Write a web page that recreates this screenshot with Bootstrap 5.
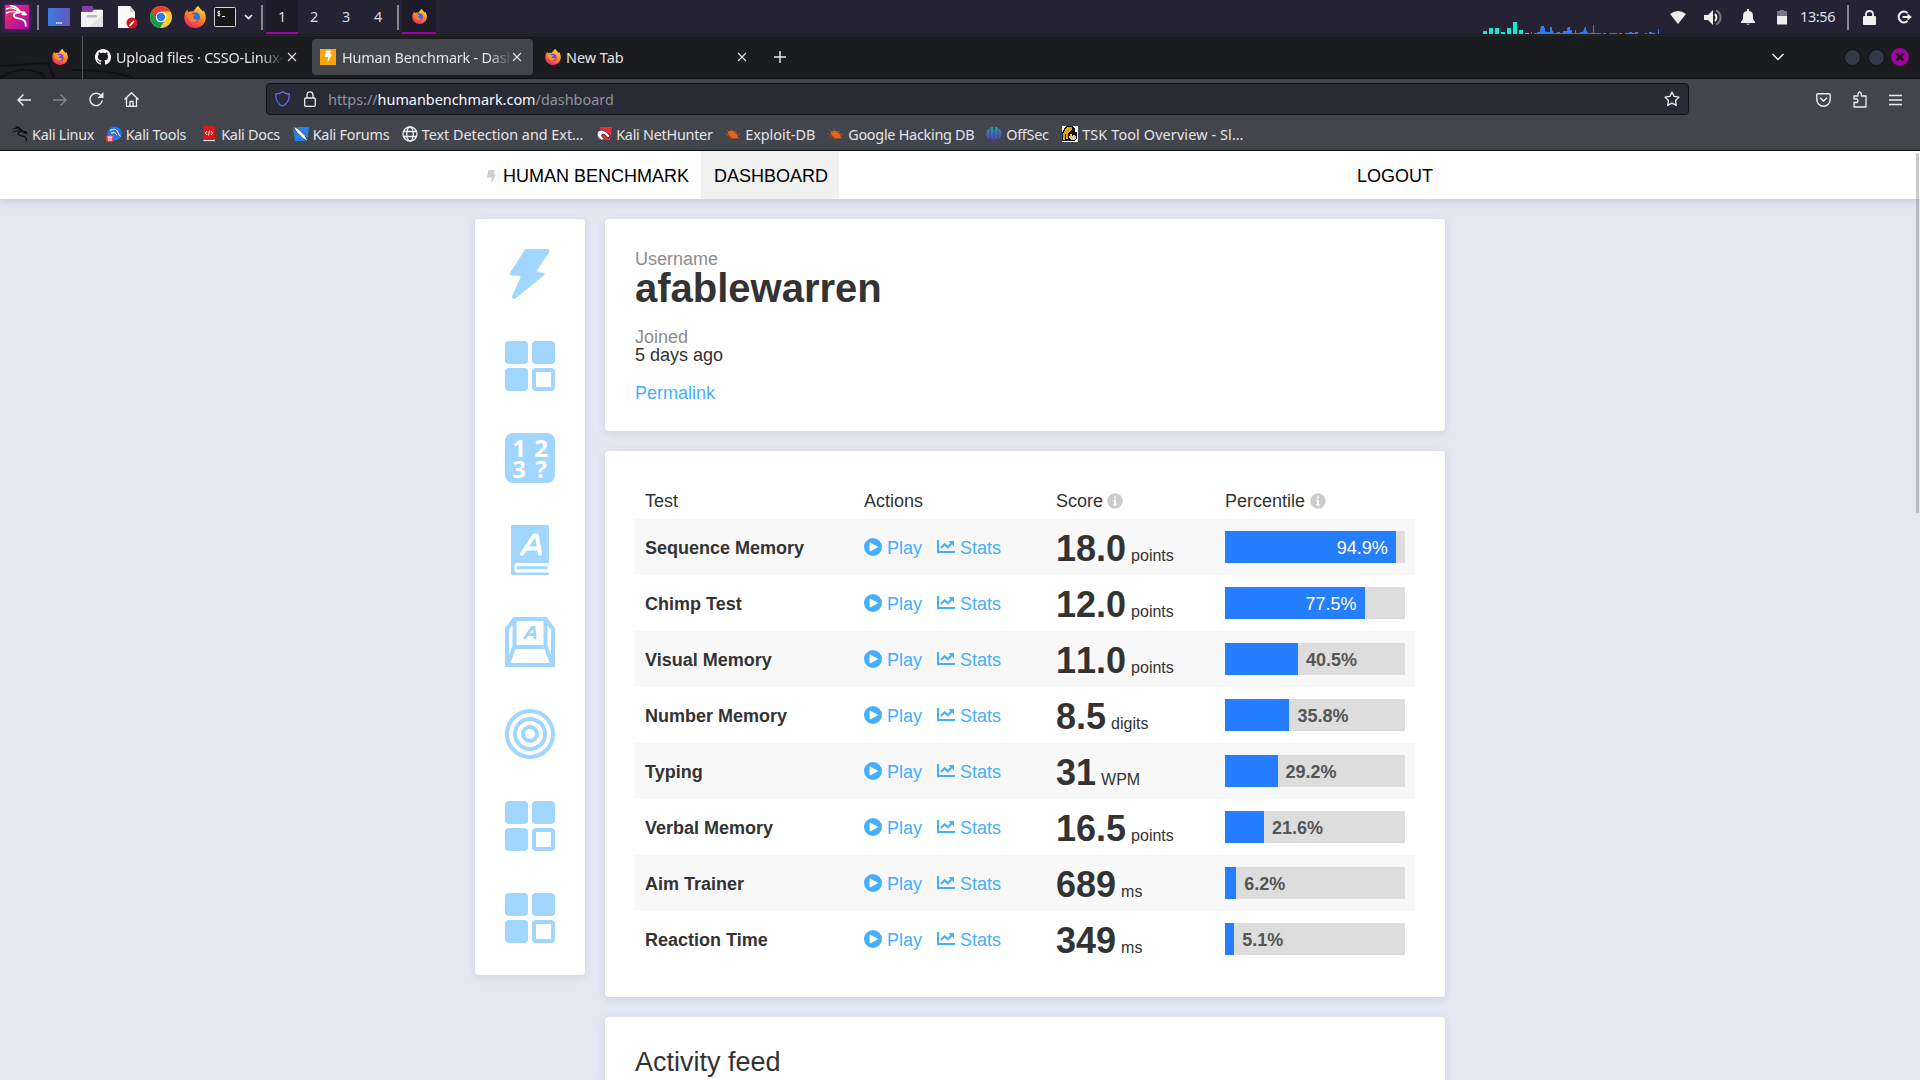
<!DOCTYPE html>
<html lang="en">
<head>
<meta charset="utf-8">
<title>Human Benchmark - Dashboard</title>
<link href="https://cdn.jsdelivr.net/npm/bootstrap@5.3.0/dist/css/bootstrap.min.css" rel="stylesheet">
<style>
body{width:1920px;height:1080px;overflow:hidden;background:#e5e8f3;color:#333;font-family:"Liberation Sans",Arial,sans-serif;font-size:18px;line-height:18px}
svg{display:block;flex:none}
.ui-font{font-family:"Noto Sans",sans-serif;font-size:14.4px;line-height:20px;color:#e4e4e6;white-space:nowrap}
.desk-panel{height:35px;background:#252333;border-bottom:1px solid #1b1b20;padding-left:5px}
.sep-bar{width:2px;height:25px;background:#88878d}
.ws{width:32px;height:34px;line-height:33px;text-align:center;color:#d6dde8}
.ws-on{background:#1e1b29;border-bottom:2px solid #a000a4}
.clock{width:36px;margin-left:13px;margin-right:-1px;margin-top:-1px;color:#dbe2ea;letter-spacing:-.35px}
.tabstrip{height:44px;background:#1b1c20;border-top:1px solid #26272b;border-bottom:1px solid #101114;position:relative}
.pinned{width:83px;height:43px;border-right:1px solid #56575b;padding-left:52px;position:relative}
.tab-item{height:36px;border-radius:4px;padding:0 8px}
.tab-item span{padding-top:1px}
.tab-on{background:#43454d}
.fade-text{overflow:hidden;-webkit-mask-image:linear-gradient(90deg,#000 calc(100% - 24px),transparent)}
.toolbar{height:41px;background:#43454d;position:relative}
.urlbar{width:1423px;height:32px;background:#282a36;border:1px solid #101116;border-radius:4px;padding:0 8px;color:#91929a}
.bookmarks{height:31px;background:#43454d;border-bottom:1px solid #0c0c0e;padding:0 0 2px 12px}
.bm{display:flex;align-items:center;gap:4px;margin-right:12px;letter-spacing:-.26px}
.bm span{padding-top:2px}
.bm-even{letter-spacing:-.02px}
.bm-tight{letter-spacing:-.26px}
.bm-wide{letter-spacing:.13px}
.winbtn{width:17px;height:17px;border-radius:50%;background:#353a48;border:1px solid #0d0e11}
.site-nav{height:48px;background:#fff;box-shadow:0 2px 8px rgba(40,40,90,.17);position:relative;color:#000}
.nav-in{width:970px;padding-left:1px}
.nav-cell{height:48px;display:flex;align-items:center;padding:2px 12px 0 13px}
.panel-box{background:#fff;border-radius:4px;box-shadow:0 2px 8px rgba(40,40,90,.12)}
.side-box{width:110px;height:756px;padding-top:30px;gap:42px;color:#a1d6ff}
.main-col{width:840px;gap:20px}
.user-box{height:212px;padding:31px 30px 0}
.score-box{height:546px;padding:30px}
.feed-box{height:63px;padding:30px 30px 0;font-size:27px;line-height:31px;border-bottom-left-radius:0;border-bottom-right-radius:0}
.soft{color:#8c8c8c}
.user-name{font-size:40px;line-height:40px;font-weight:700}
.hb-link{color:#45afff;text-decoration:none}
.score-tab{width:780px;table-layout:fixed;border-collapse:collapse}
.score-tab th{font-weight:400;height:38px;padding:2px 10px 0}
.score-tab td{height:56px;padding:0 10px;vertical-align:middle}
.score-tab td.text-cell{padding-top:2px}
.score-tab td.num-cell{padding-top:4px}
.score-tab tbody tr:nth-child(odd){background:#f8f8f8}
.big-num{font-size:36px;line-height:36px;font-weight:700;font-kerning:none}
.unit{font-size:16px}
.track{height:32px;background:#ddd}
.fill{height:32px;background:#257dff;color:#fff;text-align:right;padding-right:8px;line-height:34px}
.pct{color:#555;font-weight:700;padding-left:8px;line-height:34px}
.key-digit{font:700 24px/21px "Noto Sans",sans-serif;color:#fff;text-align:center}
.digits-tile{width:50px;height:50px;border-radius:8px;background:#a1d6ff;display:grid;grid-template:21px 21px/22px 22px;padding:4px 3px}
.scroll-thumb{position:absolute;right:1px;top:153px;width:3px;height:360px;background:rgba(100,100,105,.34);border-radius:2px}
</style>
<script src="https://cdn.jsdelivr.net/npm/bootstrap@5.3.0/dist/js/bootstrap.bundle.min.js"></script>
</head>
<body class="position-relative">
<svg width="0" height="0" class="position-absolute">
<defs>
<linearGradient id="gk" x1="0" y1="0" x2="1" y2="1"><stop offset="0" stop-color="#f03a5c"/><stop offset="1" stop-color="#a304ae"/></linearGradient>
<linearGradient id="gd" x1="0" y1="0" x2="1" y2="0"><stop offset="0" stop-color="#3a7be6"/><stop offset="1" stop-color="#6a56bb"/></linearGradient>
<linearGradient id="gf" x1=".8" y1="0" x2=".3" y2="1"><stop offset="0" stop-color="#ffe94a"/><stop offset=".45" stop-color="#ff8a20"/><stop offset="1" stop-color="#f6205f"/></linearGradient>
<linearGradient id="go" x1="0" y1="0" x2="0" y2="1"><stop offset="0" stop-color="#15a5b4"/><stop offset="1" stop-color="#6330c0"/></linearGradient>
<linearGradient id="gs" x1="0" y1="1" x2="1" y2="0"><stop offset="0" stop-color="#2a6cf0"/><stop offset="1" stop-color="#8f66e0"/></linearGradient>
<symbol id="fox" viewBox="0 0 20 20"><path fill="url(#gf)" d="M10 20C4.500 20 .3 15.800.3 10.400.3 7 1.500 5 3 3.200c.1 1 .4 1.600.9 2.200C5.400 4.700 7 4.600 8.600 5c.7-1.500 1.300-2.200 2.200-3C11.300.8 12.500.2 13.300 0c.4 2.100 2.600 3.200 3.800 5 .4-.2.5-.7.5-1.200 1.400 1.800 2.200 4 2.200 6.600C19.800 15.800 15.500 20 10 20z"/><circle cx="9.800" cy="10.500" r="4.500" fill="#7542e5"/><path fill="#ff9a25" d="M2.600 7.200c2-1 4.200-.8 6 .5l2.500.1c0 1.400-2.600 1.400-2.800 2.200 1 1.800 3.300 2.200 4.600.9-.5 2.900-3.500 4.500-6 3.300C4.300 13 2.700 10.500 2.600 7.200z"/></symbol>
<symbol id="foxblue" viewBox="0 0 20 20"><use href="#fox"/><circle cx="10.500" cy="9.800" r="3.800" fill="#2d6ee0"/><path fill="#ff7b35" d="M2.600 7.200c2-1 4.200-.8 6 .5l1.500.1c0 1.400-1.600 1.400-1.800 2.200 1 2.800 3.300 3.200 4.600 1.900-.5 1.900-3.500 3.500-6 2.300C4.300 13 2.700 10.500 2.600 7.200z"/></symbol>
<symbol id="dragon" viewBox="0 0 24 24"><g fill="none" stroke="currentColor" stroke-linecap="round" stroke-linejoin="round"><path stroke-width="1.300" d="M1.500 4.500c4-1.800 8-1.300 11.500 1.800M1.500 9c4-2.300 8-2.300 12.500-.8"/><path stroke-width="2" d="M6 1.200c4 .6 7.500 2.800 9.500 6.200l4.500.9 2 2.200-4-.4M15 8.500c-5-.4-7 2-5 4.400 2.200 2.400 8.500 1.300 10.500 4.400 1 1.600 1.200 3 1.200 4.900"/></g></symbol>
<symbol id="close" viewBox="0 0 10 10"><path d="M1 1l8 8M9 1L1 9" fill="none" stroke="currentColor" stroke-width="1.100"/></symbol>
<symbol id="bug" viewBox="0 0 16 16"><path fill="#ee6411" d="M3 5.500c2.500-2 7 0 9 3.500l1.500 3-3 .5C6.500 12.500 2.500 9 3 5.500z"/><path d="M0 8h4l-2 2h4l-1 2 4 1M6 3l3 3 2-1 0 3 4 0-3 2 2 3M1 4l5 3" stroke="#b5521f" stroke-width=".8" fill="none"/></symbol>
<symbol id="grid4" viewBox="0 0 50 50"><g fill="currentColor"><rect width="23" height="23" rx="4"/><rect x="27" width="23" height="23" rx="4"/><rect y="27" width="23" height="23" rx="4"/><path fill-rule="evenodd" d="M31 27h15a4 4 0 0 1 4 4v15a4 4 0 0 1-4 4H31a4 4 0 0 1-4-4V31a4 4 0 0 1 4-4zM31 31v15h15V31z"/></g></symbol>
<symbol id="bolt" viewBox="0 0 40 50"><path fill="currentColor" d="M14.500 1.300Q15.300 0 17 0h20q4 0 2 3.500L27.500 20.500q-1 2.500 2 3h3.200q3.500.5 1 3L5.800 49.200Q4 50.600 2.500 49.200q-1-1.200-.3-2.500L10.300 29q.8-2.300-1.500-2.600H2q-3-.2-1.700-3z"/></symbol>
<symbol id="play" viewBox="0 0 18 18"><circle cx="9" cy="9" r="9" fill="currentColor"/><path d="M6 5v8l7.500-4z" fill="#fff" stroke="#fff" stroke-linejoin="round"/></symbol>
<symbol id="stats" viewBox="0 0 18 14"><path d="M1 0v12h17" fill="none" stroke="currentColor" stroke-width="2"/><path d="M4 8l3.700-3.700 3 3L15.500 2.500" fill="none" stroke="currentColor" stroke-width="2.100"/><path d="M11.500 1H17v5.500z" fill="currentColor"/></symbol>
<symbol id="info" viewBox="0 0 16 16"><circle cx="8" cy="8" r="7.700" fill="#ccc"/><path d="M7 3.500h2v2H7zM6.200 6.700H9V11h1v1.400H6.200V11H7V8h-.8z" fill="#fff"/></symbol>
</defs></svg>

<div class="desk-panel ui-font d-flex align-items-center">
  <svg width="24" height="24" viewBox="0 0 24 24" style="overflow:visible;filter:drop-shadow(0 0 2px #a405b5)"><rect width="24" height="24" rx="1" fill="url(#gk)"/><use href="#dragon" width="23" height="23" y="-.5" color="#fff"/></svg>
  <div class="sep-bar ms-2"></div>
  <svg class="ms-2" width="24" height="18" viewBox="0 0 24 18"><rect x="1" width="22" height="18" rx="1" fill="url(#gd)"/><path d="M9 15h6" stroke="#fff" stroke-width="1.500" stroke-dasharray="1.500 .7"/></svg>
  <svg style="margin-left:9px" width="24" height="22" viewBox="0 0 24 22"><path d="M2 1q0-1 1-1h9l2 3h8v4H2z" fill="#8340a8"/><path d="M1 6h11l2-2h9v17H1z" fill="#f2f2f4"/><path d="M23 8v13H9z" fill="#e2e2e4"/><rect x="7" y="9" width="10" height="2.500" rx="1" fill="#b8b8bb"/></svg>
  <svg style="margin-left:12px" width="24" height="24" viewBox="0 0 24 24"><path d="M2 1h12l5 6v16H2z" fill="#fafafa"/><path d="M14 1v6h5z" fill="#d0d0d0"/><circle cx="16" cy="18" r="5.500" fill="#d4161c"/><path d="M13.500 21l4.500-5" stroke="#fff" stroke-width="1.700"/></svg>
  <svg style="margin-left:10px" width="22" height="22" viewBox="0 0 22 22"><circle cx="11" cy="11" r="11" fill="#fccb2c"/><path d="M11 11L1.500 5.500A11 11 0 0 0 10 22l5.500-9z" fill="#189a4c"/><path d="M11 11V5.500h9.500A11 11 0 0 0 1.500 5.500l5 8.500z" fill="#e34133"/><circle cx="11" cy="11" r="5.300" fill="#fff"/><circle cx="11" cy="11" r="4.200" fill="#367ce8"/></svg>
  <svg style="margin-left:12px" width="22" height="22"><use href="#foxblue"/></svg>
  <svg style="margin-left:8px" width="22" height="20" viewBox="0 0 22 20"><rect x=".5" y=".5" width="21" height="19" rx="1" fill="#151619" stroke="#d4d4d6"/><path d="M6 4.500H4.300q-1.300 1.200 0 2h1q1.200 1 0 2H3.500M5 3.500v6M8 9.500h3" stroke="#fff" fill="none"/></svg>
  <svg style="margin-left:8px" width="9" height="6" viewBox="0 0 9 6"><path d="M1 1l3.500 3.500L8 1" fill="none" stroke="#eee" stroke-width="1.700"/></svg>
  <div class="sep-bar" style="margin-left:8px"></div>
  <div class="d-flex" style="margin-left:3px"><div class="ws ws-on">1</div><div class="ws">2</div><div class="ws">3</div><div class="ws">4</div></div>
  <div class="sep-bar" style="margin-left:3px"></div>
  <div class="ws ws-on d-flex align-items-center justify-content-center" style="margin-left:3px;width:34px"><svg width="15" height="15"><use href="#foxblue"/></svg></div>
  <svg class="align-self-end" style="margin-left:1047px" width="178" height="13" viewBox="0 0 178 13"><path fill="#10ecd2" d="M0 10h4v3H0zM6 7h4v6H6zM12 7h4v6h-4zM18 11h4v2h-4zM24 7h4v6h-4zM30 1h4v12h-4zM36 9h4v4h-4zM42 12h4v1h-4z"/><path fill="#2d7cf0" d="M48 11h1v2h-1zM51 13v-1h3v-1h3V9l1-4h3v2h1v3l2 1h3V6h2v3l2 3h3v-1h3v1h3v-2h4V7l1-1h2v3h2v3h3v-3h1v3h4v-1h3l2-5h1v3l2 3h5V4h1v8h4v1zM114 12h4v1h-4zM120 12h3v1h-3zM126 12h8v1h-8zM136 12h3v1h-3zM142 12h4v-1h3v1h3v-1h3v2h-13zM162 12h2v1h-2zM166 11h3v1h3v1h-6zM175 8h1v5h-1z"/></svg>
  <svg style="margin-left:9px" width="16" height="13" viewBox="0 0 16 13"><path fill="#eee" d="M0 3Q8-3 16 3L8 13z"/></svg>
  <svg style="margin-left:18px" width="18" height="17" viewBox="0 0 18 17"><path fill="#eee" d="M0 6h4l5-5v15l-5-5H0z"/><path d="M11 5q3 3.500 0 7" stroke="#eee" stroke-width="2" fill="none"/><path d="M12 1.500c6 3 6 11 0 14" stroke="#77757f" stroke-width="2" fill="none"/></svg>
  <svg style="margin-left:19px" width="14" height="16" viewBox="0 0 14 16"><path fill="#eee" d="M6 0h2v2q4 .7 4 5v3l2 3v1H0v-1l2-3V7q0-4.300 4-5zM5 14.800h4q-2 1.700-4 0z"/></svg>
  <svg style="margin-left:22px" width="10" height="15" viewBox="0 0 10 15"><path fill="#77757f" d="M0 1h3V0h4v1h3v6H0z"/><path fill="#eee" d="M0 6h10v8.500H0z"/></svg>
  <span class="clock">13:56</span>
  <div class="sep-bar" style="margin-left:12px"></div>
  <svg style="margin-left:14px" width="13" height="15" viewBox="0 0 13 15"><path d="M3 7V4q0-3 3.500-3T10 4v3" stroke="#eee" stroke-width="1.800" fill="none"/><rect y="6" width="13" height="9" rx="1" fill="#eee"/></svg>
  <svg style="margin-left:21px" width="16" height="14" viewBox="0 0 16 14"><path d="M10.500 3A5.300 5.300 0 1 0 10.500 11M5.500 7H12" stroke="#eee" stroke-width="2.200" fill="none"/><path fill="#eee" d="M10.500 3.500L15 7l-4.500 3.500z"/></svg>
</div>

<div class="tabstrip ui-font d-flex align-items-center">
  <svg class="position-absolute bottom-0 start-0" width="140" height="16" viewBox="0 0 140 16"><path d="M0 4l48-3 6 15M0 16q22-14 42-4l3 4M72 8q40 0 62 8" fill="none" stroke="#101114" stroke-width="2"/></svg>
  <div class="pinned d-flex align-items-center"><svg width="16" height="16"><use href="#fox"/></svg></div>
  <div class="tab-item d-flex align-items-center" style="width:223px;padding-left:12px;margin-left:0">
    <svg width="16" height="16" viewBox="0 0 16 16"><path fill="#fff" d="M8 0C3.580 0 0 3.580 0 8c0 3.540 2.290 6.530 5.470 7.590.4.070.55-.17.55-.38 0-.19-.01-.82-.01-1.490-2.010.37-2.530-.49-2.690-.94-.09-.23-.48-.94-.82-1.130-.28-.15-.68-.52-.01-.53.63-.01 1.080.58 1.230.82.72 1.210 1.870.87 2.330.66.07-.52.28-.87.51-1.070-1.780-.2-3.640-.89-3.640-3.950 0-.87.31-1.590.82-2.150-.08-.2-.36-1.020.08-2.120 0 0 .67-.21 2.200.82.64-.18 1.320-.27 2-.27s1.360.09 2 .27c1.530-1.040 2.200-.82 2.200-.82.44 1.100.16 1.920.08 2.120.51.56.82 1.270.82 2.150 0 3.070-1.870 3.750-3.650 3.950.29.25.54.73.54 1.480 0 1.070-.01 1.930-.01 2.200 0 .21.15.46.55.38A8 8 0 0 0 16 8c0-4.420-3.580-8-8-8z"/></svg>
    <span class="fade-text" style="margin-left:5px;width:168px;letter-spacing:-.2px">Upload files · CSSO-Linux-</span>
    <svg style="margin-left:3px" width="10" height="10"><use href="#close"/></svg>
  </div>
  <div class="tab-item tab-on d-flex align-items-center" style="width:221px;margin-left:6px">
    <svg width="16" height="16" viewBox="0 0 16 16"><rect width="16" height="16" fill="#ffa408"/><path d="M6 1.500h5l-1 4h2L7.500 13.500l.8-5.500H5z" fill="#fff"/></svg>
    <span class="fade-text" style="margin-left:6px;width:170px;letter-spacing:-.2px">Human Benchmark - Dash</span>
    <svg style="margin-left:0" width="10" height="10"><use href="#close"/></svg>
  </div>
  <div class="tab-item d-flex align-items-center" style="width:221px;margin-left:4px">
    <svg width="16" height="16"><use href="#fox"/></svg>
    <span style="margin-left:5px;width:171px">New Tab</span>
    <svg width="10" height="10"><use href="#close"/></svg>
  </div>
  <svg style="margin-left:16px" width="12" height="12" viewBox="0 0 12 12"><path d="M6 0v12M0 6h12" stroke="#eee" stroke-width="1.400"/></svg>
  <svg style="margin-left:986px" width="12" height="8" viewBox="0 0 12 8"><path d="M.5 1L6 6.500 11.500 1" fill="none" stroke="#eee" stroke-width="1.400"/></svg>
  <div class="winbtn" style="margin-left:60px"></div><div class="winbtn" style="margin-left:7px"></div>
  <svg style="margin-left:6px" width="18" height="18" viewBox="0 0 18 18"><circle cx="9" cy="9" r="9" fill="#a0049f"/><path d="M5.500 5.500l7 7M12.500 5.500l-7 7" stroke="#1b1020" stroke-width="2.500"/></svg>
</div>

<div class="toolbar ui-font d-flex align-items-center">
  <svg style="margin-left:17px" width="14" height="12" viewBox="0 0 14 12"><path d="M14 6H1M6.500.5L1 6l5.500 5.500" fill="none" stroke="#f0f0f2" stroke-width="1.400"/></svg>
  <svg style="margin-left:22px" width="14" height="12" viewBox="0 0 14 12"><path d="M0 6h13M7.500.5L13 6l-5.500 5.500" fill="none" stroke="#85868c" stroke-width="1.400"/></svg>
  <svg style="margin-left:22px" width="15" height="15" viewBox="0 0 15 15"><path d="M13.300 8.500A6.200 6.200 0 1 1 12 3.500" fill="none" stroke="#f0f0f2" stroke-width="1.400"/><path d="M14.500 0v6h-6z" fill="#f0f0f2"/></svg>
  <svg style="margin-left:20px" width="15" height="15" viewBox="0 0 15 15"><path d="M.5 7.500L7.500.8l7 6.700M2.500 6v8.300h10V6M6 14v-4.500h3V14" fill="none" stroke="#f0f0f2" stroke-width="1.300" stroke-linejoin="round"/></svg>
  <div class="urlbar d-flex align-items-center" style="margin-left:127px;margin-top:-1px">
    <svg width="15" height="16" viewBox="0 0 15 16"><path d="M7.500.8Q10 2.800 14.200 3C14.500 9 12.500 13 7.500 15.200 2.500 13 .5 9 .8 3 5 2.800 7.500.8 7.500.8z" fill="none" stroke="url(#gs)" stroke-width="1.300"/></svg>
    <svg style="margin-left:14px" width="12" height="16" viewBox="0 0 12 16"><path d="M3 7V4q0-3.200 3-3.200T9 4v3" fill="none" stroke="#eee" stroke-width="1.300"/><rect x=".7" y="7" width="10.600" height="8.300" rx="1.300" fill="none" stroke="#eee" stroke-width="1.300"/></svg>
    <span style="margin-left:12px;padding-top:1px">https://<span style="color:#fbfbfe">humanbenchmark.com</span>/dashboard</span>
    <svg class="ms-auto" width="16" height="16" viewBox="0 0 16 16"><path d="M8 1l2.100 4.400 4.900.7-3.500 3.400.8 4.900L8 12.100l-4.300 2.300.8-4.900L1 6.100l4.900-.7z" fill="none" stroke="#eee" stroke-width="1.300" stroke-linejoin="round"/></svg>
  </div>
  <svg style="margin-left:127px" width="15" height="14" viewBox="0 0 15 14"><path d="M2 .8h11q1.200 0 1.200 1.200v4.500a6.700 6.700 0 0 1-13.400 0V2Q.8.800 2 .8zM4 4.800L7.500 8 11 4.800" fill="none" stroke="#eee" stroke-width="1.400"/></svg>
  <svg style="margin-left:22px" width="15" height="17" viewBox="0 0 15 17"><path d="M1 16V11.500h3q2-2 0-3.500H1V5h4V3q1.500-4 3.500 0v2H13v11z" fill="none" stroke="#eee" stroke-width="1.300" stroke-linejoin="round"/></svg>
  <svg style="margin-left:21px" width="13" height="12" viewBox="0 0 13 12"><path d="M0 1.500h13M0 6h13M0 10.500h13" stroke="#eee" stroke-width="1.300"/></svg>
</div>

<div class="bookmarks ui-font d-flex align-items-center">
  <div class="bm"><svg width="16" height="16" color="#0b0b0d"><use href="#dragon"/></svg><span style="width:61.700px">Kali Linux</span></div>
  <div class="bm"><svg width="16" height="16" viewBox="0 0 16 16"><circle cx="8.500" cy="7.500" r="7" fill="#2477ef"/><path d="M4 4.500q6-3 7.500 1t3 5M5 7q4-2 6 2" fill="none" stroke="#fff"/><rect y="9" width="8" height="7" rx="2" fill="#e93d43"/><path d="M1.500 11h5M3 11v4M5 11v4" stroke="#fff" fill="none"/></svg><span style="width:63.500px">Kali Tools</span></div>
  <div class="bm"><svg width="16" height="16" viewBox="0 0 16 16"><path d="M2 1q0-1 1-1h11v16H3q-1 0-1-1z" fill="#d41a1f"/><path d="M2.500 14.500H14" stroke="#eee"/><path d="M6 5L4.500 7 6 9M10 5l1.500 2L10 9M8.500 4.500l-1 5" stroke="#fff" fill="none"/></svg><span style="width:59.500px">Kali Docs</span></div>
  <div class="bm"><svg width="16" height="16" viewBox="0 0 16 16"><path d="M0 1h16l-2 14H2z" fill="#2384f0"/><path d="M0 .5l5 2 7 7 3 6-5-3-6-6z" fill="#fff" stroke="#222" stroke-width=".7"/></svg><span style="width:77px">Kali Forums</span></div>
  <div class="bm bm-even"><svg width="16" height="16" viewBox="0 0 16 16"><g fill="none" stroke="#eee" stroke-width="1.300"><circle cx="8" cy="8" r="7"/><ellipse cx="8" cy="8" rx="3.300" ry="7"/><path d="M1.500 5.500h13M1.500 10.500h13"/></g></svg><span style="width:162.500px">Text Detection and Ext…</span></div>
  <div class="bm bm-tight"><svg width="16" height="16" viewBox="0 0 16 16"><path d="M4 1h12l-2 13H4z" fill="#ee2e34"/><path d="M1 9q0-5 5-5 5 1 8 6l-2 2q-3-4-5-4-2 .5-1 2.500l2 2-2 2Q1 12 1 9z" fill="#fff" stroke="#201518" stroke-width=".8"/></svg><span style="width:97px">Kali NetHunter</span></div>
  <div class="bm bm-even"><svg width="16" height="16"><use href="#bug"/></svg><span style="width:71px">Exploit-DB</span></div>
  <div class="bm"><svg width="16" height="16"><use href="#bug"/></svg><span style="width:126px">Google Hacking DB</span></div>
  <div class="bm"><svg width="16" height="16" viewBox="0 0 16 16"><path fill="url(#go)" d="M3.500 2.200v11.600Q.5 12 .5 8t3-5.800zM4.500 1.500L7 .7v12.500l-2.500-.5zM7.500 4h1v12h-1zM9 .7l2.500.8v11.200l-2.500.5zM12.500 2.200q3 1.800 3 5.800t-3 5.800z"/></svg><span style="width:44px">OffSec</span></div>
  <div class="bm bm-wide"><svg width="16" height="16" viewBox="0 0 16 16" shape-rendering="crispEdges"><path fill="#fff" d="M0 0h16v16H0z"/><path fill="#111" d="M4 0h6l3 3v3h2v6l-3 3H0V7l2-4z"/><path fill="#e2a310" d="M5 1h5v2L8 5 6 8v5H4V8H3v6H1V8l2-4z"/><path fill="#d8c9a0" d="M8 8h2v1h4v3l-2 2H9l-2-2z"/><path fill="#111" d="M10 8h1v2h-1zM13 8h1v2h-1z"/></svg><span>TSK Tool Overview - Sl…</span></div>
</div>

<nav class="site-nav d-flex justify-content-center">
  <div class="nav-in d-flex">
    <div class="nav-cell" style="padding-right:12px"><svg width="9" height="14" viewBox="0 0 9 14" style="margin:1px 7px 0 -2px"><path d="M1.500 0H7.500L6.500 4.500H9L4 14l1-6.500H0z" fill="#ccc"/></svg>HUMAN BENCHMARK</div>
    <div class="nav-cell" style="background:#f1f1f1;padding-right:11px">DASHBOARD</div>
    <div class="nav-cell ms-auto">LOGOUT</div>
  </div>
</nav>

<main class="d-flex justify-content-center align-items-start" style="padding-top:20px;gap:20px">
  <aside class="panel-box side-box d-flex flex-column align-items-center">
    <svg width="50" height="50"><use href="#bolt" width="40" height="50" x="5"/></svg>
    <svg width="50" height="50"><use href="#grid4"/></svg>
    <div class="digits-tile"><span class="key-digit">1</span><span class="key-digit">2</span><span class="key-digit">3</span><span class="key-digit">?</span></div>
    <svg width="50" height="50" viewBox="0 0 50 50"><path fill="currentColor" fill-rule="evenodd" d="M7 0h36q1 0 1 1v37H11.500Q9.500 38 9.500 40v5q0 2.500 2 2.500H44V49q0 1-1 1H7q-1 0-1-1V1q0-1 1-1z"/><path d="M13 42.700h28" stroke="currentColor" stroke-width="3" stroke-linecap="round"/><path d="M17 29L29 10.500h3L35 29M22 23.500h11" fill="none" stroke="#fff" stroke-width="4" stroke-linecap="round" stroke-linejoin="round"/></svg>
    <svg width="50" height="50" viewBox="0 0 50 50"><g fill="none" stroke="currentColor" stroke-width="4"><path d="M9.500 2h31L48 12v36H2V12zM9.500 2v27L3 47M40.500 2v27L47 47M9.500 30h31"/><path stroke-width="3" d="M20 21l7-10.500h2L30 21M23 17.500h6" stroke-linecap="round" stroke-linejoin="round"/></g></svg>
    <svg width="50" height="50" viewBox="0 0 50 50"><g fill="none" stroke="currentColor" stroke-width="4"><circle cx="25" cy="25" r="23"/><circle cx="25" cy="25" r="15"/><circle cx="25" cy="25" r="7"/></g></svg>
    <svg width="50" height="50"><use href="#grid4"/></svg>
    <svg width="50" height="50"><use href="#grid4"/></svg>
  </aside>
  <div class="main-col d-flex flex-column">
    <section class="panel-box user-box">
      <div class="soft">Username</div><div class="user-name">afablewarren</div>
      <div class="soft" style="margin-top:20px">Joined</div><div>5 days ago</div>
      <a class="hb-link d-block" style="margin-top:20px" href="#">Permalink</a>
    </section>
    <section class="panel-box score-box">
      <table class="score-tab">
        <colgroup><col style="width:219px"><col style="width:192px"><col style="width:169px"><col style="width:200px"></colgroup>
        <thead><tr><th>Test</th><th>Actions</th><th><div class="d-flex align-items-center">Score<svg class="ms-1" width="16" height="16"><use href="#info"/></svg></div></th><th><div class="d-flex align-items-center">Percentile<svg style="margin-left:5px" width="16" height="16"><use href="#info"/></svg></div></th></tr></thead>
        <tbody id="scores"></tbody>
      </table>
    </section>
    <section class="panel-box feed-box">Activity feed</section>
  </div>
</main>
<div class="scroll-thumb"></div>
<script>
const tests=[["Sequence Memory","18.0","points",94.9],["Chimp Test","12.0","points",77.5],["Visual Memory","11.0","points",40.5],["Number Memory","8.5","digits",35.8],["Typing","31","WPM",29.2],["Verbal Memory","16.5","points",21.6],["Aim Trainer","689","ms",6.2],["Reaction Time","349","ms",5.1]];
document.getElementById("scores").innerHTML=tests.map(([name,score,unit,p])=>`<tr><td class="text-cell fw-bold">${name}</td>
<td class="text-cell"><div class="d-flex"><a class="hb-link d-flex" href="#"><svg width="18" height="18" style="margin-right:5px;margin-top:-1px"><use href="#play"/></svg>Play</a><a class="hb-link d-flex" style="margin-left:15px" href="#"><svg width="18" height="14" style="margin-right:5px;margin-top:1px"><use href="#stats"/></svg>Stats</a></div></td>
<td class="num-cell"><span class="big-num">${score}</span> <span class="unit">${unit}</span></td>
<td><div class="track d-flex"><div class="fill" style="width:${p}%">${p>50?p+"%":""}</div>${p>50?"":`<span class="pct">${p}%</span>`}</div></td></tr>`).join("");
</script>
</body>
</html>
